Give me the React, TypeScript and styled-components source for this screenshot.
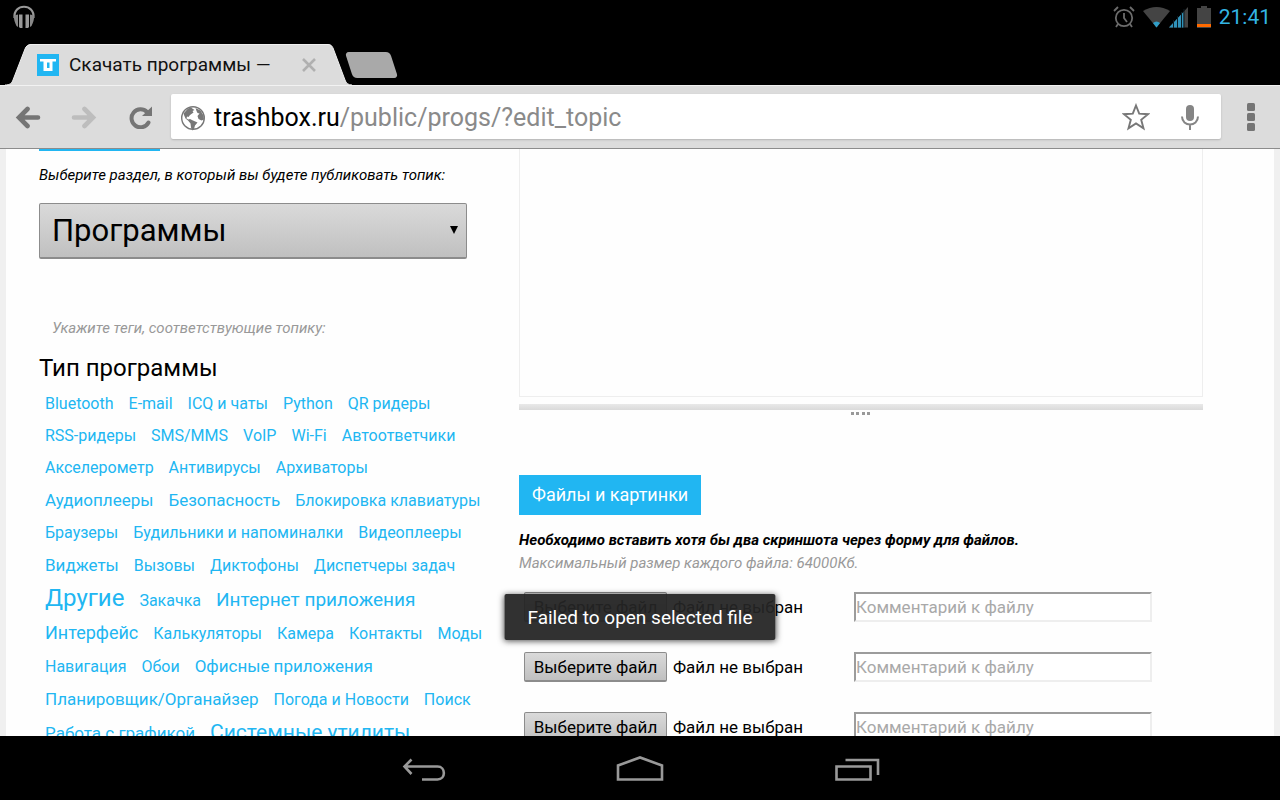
import React, { useRef } from "react";
import styled, { createGlobalStyle } from "styled-components";

const blue = "#21b6f2";

const Global = createGlobalStyle`
  *, *::before, *::after { box-sizing: border-box; }
  body { margin: 0; background: #000; }
  body, button, input, select, textarea { font-family: Roboto, "Noto Sans", sans-serif; }
  button { border: 0; padding: 0; background: none; cursor: pointer; }
  p, h2, ul { margin: 0; padding: 0; font-weight: 400; }
`;

const Screen = styled.div`
  position: relative;
  display: flex;
  flex-direction: column;
  height: 100vh;
  overflow: hidden;
  background: #000;
`;

const StatusBar = styled.div`
  display: flex;
  align-items: center;
  justify-content: space-between;
  flex: none;
  height: 34px;
  padding: 0 9px 0 12px;
`;

const StatusIcons = styled.div`
  display: flex;
  align-items: center;
  gap: 8px;
`;

const Clock = styled.time`
  color: #33b5e5;
  font-size: 21px;
  line-height: 34px;
`;

const TabStrip = styled.div`
  display: flex;
  align-items: flex-end;
  flex: none;
  height: 51px;
  padding-left: 5px;
`;

const Tab = styled.div`
  position: relative;
  display: flex;
  align-items: center;
  width: 348px;
  height: 41px;
  padding: 0 37px 0 32px;
`;

const TabShape = styled.svg`
  position: absolute;
  inset: 0;
`;

const TabTitle = styled.span`
  position: relative;
  flex: 1;
  margin-left: 10px;
  font-size: 19px;
  line-height: 24px;
  color: #111;
`;

const Favicon = styled.svg`
  position: relative;
  flex: none;
`;

const TabClose = styled.button`
  position: relative;
  display: flex;
`;

const NewTab = styled.button`
  width: 45px;
  height: 26px;
  margin: 0 0 7px -4px;
  border-radius: 4px;
  background: #a9a9a9;
  transform: skewX(18deg);
`;

const Toolbar = styled.div`
  display: flex;
  align-items: center;
  flex: none;
  height: 64px;
  padding: 0 17px 1px 14px;
  border-top: 1px solid #f2f2f2;
  border-bottom: 1px solid #8c8c8c;
  background: #dcdcdc;
`;

const IconButton = styled.button`
  display: flex;
  flex: none;
`;

const History = styled.div`
  display: flex;
  align-items: center;
  gap: 28px;
  width: 157px;
`;

const Omnibox = styled.div`
  display: flex;
  align-items: center;
  flex: 1;
  height: 45px;
  margin-right: 18px;
  padding: 0 18px 0 9px;
  gap: 27px;
  border-radius: 2px;
  background: #fff;
  box-shadow: 0 1px 2px #b4b4b4;
`;

const Address = styled.div`
  display: flex;
  align-items: center;
  flex: 1;
  gap: 8px;
  padding-top: 2px;
  font-size: 25px;
  line-height: 32px;
  color: #8a8a8a;
`;

const Host = styled.span`
  color: #000;
`;

const Viewport = styled.main`
  flex: 1;
  min-height: 0;
  padding: 0 6px;
  overflow: hidden;
  background: #f0f0f0;
`;

const Page = styled.div`
  display: grid;
  grid-template-columns: 448px minmax(0, 1fr);
  column-gap: 32px;
  min-height: 100%;
  padding: 0 71px 0 33px;
  background: #fefefe;
`;

const Column = styled.section`
  display: flex;
  flex-direction: column;
  align-items: flex-start;
`;

const HeadingEdge = styled.div`
  width: 121px;
  height: 2px;
  background: ${blue};
`;

const Note = styled.p<{ $tone?: string; $bold?: boolean }>`
  display: block;
  font-size: 15px;
  line-height: 23px;
  font-style: italic;
  font-weight: ${(p) => (p.$bold ? 700 : 400)};
  color: ${(p) => p.$tone ?? "#000"};
`;

const SectionLabel = styled.label`
  margin-top: 13px;
`;

const TagHint = styled.div`
  margin: 58px 0 0 13px;
`;

const SelectBox = styled.div`
  position: relative;
  width: 428px;
  margin-top: 16px;
`;

const Select = styled.select`
  display: block;
  width: 100%;
  height: 56px;
  padding: 0 12px;
  appearance: none;
  border: 1px solid #8c8c8c;
  border-bottom-width: 2px;
  border-radius: 2px;
  background: linear-gradient(#dadada, #c0c0c0);
  color: #000;
  font-size: 31px;
`;

const SelectArrow = styled.svg`
  position: absolute;
  top: 23px;
  right: 9px;
  pointer-events: none;
`;

const TagHeading = styled.h2`
  margin-top: 12px;
  font-size: 24px;
  line-height: 32px;
  color: #000;
`;

const TagList = styled.ul`
  display: flex;
  flex-wrap: wrap;
  align-items: baseline;
  column-gap: 15px;
  padding: 4px 0 0 6px;
  list-style: none;
`;

const TagItem = styled.li<{ $size: number }>`
  font-size: ${(p) => p.$size}px;
  line-height: 32px;
  white-space: nowrap;
`;

const TagLink = styled.a`
  color: ${blue};
  text-decoration: none;
`;

const TopicText = styled.textarea`
  display: block;
  width: 100%;
  height: 248px;
  border: 1px solid #eee;
  border-top: 0;
  resize: none;
  outline: 0;
  background: transparent;
`;

const Resizer = styled.div`
  display: flex;
  flex-direction: column;
  align-items: center;
  width: 100%;
  height: 12px;
  margin: 7px 0 59px;
`;

const ResizerBar = styled.div`
  width: 100%;
  height: 6px;
  margin-bottom: 2px;
  background: linear-gradient(#e9e9e9, #dadada);
`;

const BlueHeading = styled.h2`
  height: 40px;
  padding: 0 13px;
  background: ${blue};
  color: #fff;
  font-size: 18px;
  line-height: 40px;
`;

const FileNotes = styled.div`
  margin-top: 14px;
`;

const FileRows = styled.div`
  display: flex;
  flex-direction: column;
  gap: 30px;
  margin: 17px 0 0 5px;
`;

const FileRow = styled.div`
  display: grid;
  grid-template-columns: 330px 298px;
  height: 30px;
`;

const FilePicker = styled.div`
  display: flex;
  align-items: center;
  gap: 6px;
  font-size: 17px;
  color: #000;
`;

const FileButton = styled.button`
  width: 143px;
  height: 30px;
  border: 1px solid #8c8c8c;
  border-bottom-width: 2px;
  border-radius: 2px;
  background: linear-gradient(#dadada, #c0c0c0);
  color: #000;
  font-size: 17px;
  line-height: 26px;
`;

const Comment = styled.input`
  min-width: 0;
  height: 30px;
  padding: 0;
  border: 2px solid;
  border-color: #9c9c9c #eee #eee #9c9c9c;
  border-radius: 0;
  outline: 0;
  background: #fff;
  font-size: 17px;

  &::placeholder { color: #a9a9a9; opacity: 1; }
`;

const Toast = styled.div`
  position: absolute;
  bottom: 160px;
  left: 50%;
  padding: 12px 23px 10px;
  transform: translateX(-50%);
  border-radius: 2px;
  background: rgba(36, 36, 36, 0.94);
  box-shadow: 0 1px 6px rgba(0, 0, 0, 0.7);
  color: #fff;
  font-size: 19px;
  line-height: 24px;
  white-space: nowrap;
`;

const NavBar = styled.nav`
  display: flex;
  justify-content: center;
  align-items: center;
  flex: none;
  gap: 168px;
  height: 64px;
  padding-top: 2px;
  background: #000;
`;

const tags: [string, number][] = [
  ["Bluetooth", 16], ["E-mail", 16], ["ICQ и чаты", 16], ["Python", 16], ["QR ридеры", 16],
  ["RSS-ридеры", 16], ["SMS/MMS", 16], ["VoIP", 16], ["Wi-Fi", 16], ["Автоответчики", 16],
  ["Акселерометр", 16], ["Антивирусы", 16], ["Архиваторы", 16],
  ["Аудиоплееры", 17], ["Безопасность", 17], ["Блокировка клавиатуры", 16],
  ["Браузеры", 16], ["Будильники и напоминалки", 16], ["Видеоплееры", 16],
  ["Виджеты", 17], ["Вызовы", 16], ["Диктофоны", 16], ["Диспетчеры задач", 16],
  ["Другие", 24], ["Закачка", 16], ["Интернет приложения", 19],
  ["Интерфейс", 18], ["Калькуляторы", 16], ["Камера", 16], ["Контакты", 16], ["Моды", 16],
  ["Навигация", 16], ["Обои", 16], ["Офисные приложения", 17],
  ["Планировщик/Органайзер", 17], ["Погода и Новости", 16], ["Поиск", 16],
  ["Работа с графикой", 17], ["Системные утилиты", 21],
];

function FileField({ index }: { index: number }) {
  const input = useRef<HTMLInputElement>(null);
  return (
    <FileRow>
      <FilePicker>
        <input ref={input} type="file" hidden aria-label={`Файл ${index}`} />
        <FileButton type="button" onClick={() => input.current?.click()}>Выберите файл</FileButton>
        <span>Файл не выбран</span>
      </FilePicker>
      <Comment type="text" placeholder="Комментарий к файлу" aria-label={`Комментарий к файлу ${index}`} />
    </FileRow>
  );
}

export default function App() {
  return (
    <Screen>
      <Global />
      <StatusBar>
        <svg width="24" height="24" viewBox="0 0 24 24" aria-hidden="true">
          <path d="M2.500 13C1 -2 23 -2 21.500 13" fill="none" stroke="#999" strokeWidth="2.200" />
          <path d="M2 10.500L6 9.500V22L4.500 21C3 18 1.500 14 2 10.500zM22 10.500L18 9.500V22L19.500 21C21 18 22.500 14 22 10.500z" fill="#888" />
          <path d="M7 9.500h3.500V23H8L7 22zM17 9.500h-3.500V23H16L17 22z" fill="#999" />
        </svg>
        <StatusIcons>
          <svg width="22" height="22" viewBox="0 0 22 22" fill="none" stroke="#6c6c6c" strokeWidth="1.8" aria-hidden="true">
            <circle cx="11" cy="12" r="8.2" />
            <path d="M11 7v5l3 4M1 5l4-4M21 5l-4-4M5 18l-2 3M17 18l2 3" />
          </svg>
          <svg width="46" height="22" viewBox="0 0 46 22" aria-hidden="true">
            <path d="M0 5Q13.500-3 27 5L13.500 21.500z" fill="#444" />
            <path d="M10 17q3.500-3 7 0l-3.500 4.500z" fill="#2f9ec8" />
            <path d="M26 21.500L45 1v20.500z" fill="#444" />
            <path d="M26 21.500L40.500 6v15.500z" fill="#2f93bb" />
            <path d="M30.500 14v8M34.500 10v12M38.500 6v16M41 3v19" stroke="#0a1c24" strokeWidth="1" />
          </svg>
          <svg width="14" height="22" viewBox="0 0 14 22" aria-hidden="true">
            <path d="M0 2h4V0h6v2h4v20H0z" fill="#444" />
            <path d="M0 18h14v3H0z" fill="#ff6a00" />
          </svg>
          <Clock>21:41</Clock>
        </StatusIcons>
      </StatusBar>

      <TabStrip>
        <Tab>
          <TabShape width="348" height="41" viewBox="0 0 348 41" aria-hidden="true">
            <path d="M0 41C5 41 7 39 8 36L20 5C21 2 23 0 27 0H322C326 0 327 2 328 4L340 36C341 39 343 41 347 41z" fill="#dcdcdc" />
            <path d="M0 41C5 41 7 39 8 36L20 5C21 2 23 .5 27 .5H322C326 .5 327 2 328 4L340 36C341 39 343 41 347 41" fill="none" stroke="#f0f0f0" />
          </TabShape>
          <Favicon width="22" height="22" viewBox="0 0 22 22" aria-hidden="true">
            <path d="M0 0h22v22H0z" fill={blue} />
            <path d="M3 5h16v2.500h-3.500V17H6.500V7.500H3zM10 8.500v5.500h2.500V8.500z" fill="#fff" fillRule="evenodd" />
          </Favicon>
          <TabTitle>Скачать программы —</TabTitle>
          <TabClose type="button" aria-label="Закрыть вкладку">
            <svg width="14" height="14" viewBox="0 0 14 14" stroke="#b0b0b0" strokeWidth="2.600"><path d="M1 1l12 12M13 1L1 13" /></svg>
          </TabClose>
        </Tab>
        <NewTab type="button" aria-label="Новая вкладка" />
      </TabStrip>

      <Toolbar>
        <History>
          <IconButton type="button" aria-label="Назад">
            <svg width="28" height="24" viewBox="0 0 28 24" fill="none" stroke="#757575" strokeWidth="4.600" strokeLinecap="round"><path d="M5.500 12.500h18.500M13.500 4L5 12.500l8.500 8.500" /></svg>
          </IconButton>
          <IconButton type="button" aria-label="Вперёд">
            <svg width="28" height="24" viewBox="0 0 28 24" fill="none" stroke="#bdbdbd" strokeWidth="4.600" strokeLinecap="round"><path d="M22.500 12.500H4M14.500 4l8.500 8.500-8.500 8.500" /></svg>
          </IconButton>
          <IconButton type="button" aria-label="Обновить">
            <svg width="28" height="24" viewBox="0 0 28 24" fill="none" stroke="#757575" strokeWidth="4" strokeLinecap="round"><path d="M22.500 17.500a9 9 0 1 1-1.500-10.500" /><path d="M26 1.500v9.500H16z" fill="#757575" stroke="none" /></svg>
          </IconButton>
        </History>
        <Omnibox>
          <Address>
            <svg width="26" height="26" viewBox="0 0 26 26" aria-hidden="true">
              <circle cx="13" cy="13" r="11.300" fill="#fff" stroke="#777" strokeWidth="1.400" />
              <path d="M3.500 8.500L8 3.500l3-1 2 1.500 1.500 1-2 1 1 1.500-3.500 2.500-1.500 2-1.500-.5-.5 2 2 1 1.500-.5 3 1.500 4.500 2-2.500 3-1 3.500-1.500 1.500-1.500-3-.5-4-2.500-3-2.500-2-1.500-3.500z" fill="#777" />
              <path d="M15.500 3l5 2.500 3 5 .5 4-2.500 1-3-1.500-1-3 2-2.500-2-.5-1-2z" fill="#777" />
            </svg>
            <span><Host>trashbox.ru</Host>/public/progs/?edit_topic</span>
          </Address>
          <IconButton type="button" aria-label="Добавить в закладки">
            <svg width="28" height="28" viewBox="0 0 28 28" fill="none" stroke="#777" strokeWidth="1.900"><path d="M14 2.500l3.200 8.200 8.800.5-6.800 5.600 2.300 8.500L14 20.500l-7.500 4.800 2.300-8.500L2 11.200l8.800-.5z" /></svg>
          </IconButton>
          <IconButton type="button" aria-label="Голосовой поиск">
            <svg width="26" height="28" viewBox="0 0 26 28" fill="none" stroke="#858585" strokeWidth="2"><rect x="9" y="2" width="8" height="16" rx="4" fill="#858585" stroke="none" /><path d="M5 13.500c0 10.500 16 10.500 16 0M13 21v6" /></svg>
          </IconButton>
        </Omnibox>
        <IconButton type="button" aria-label="Меню">
          <svg width="24" height="28" viewBox="0 0 24 28" fill="#757575"><rect x="8" width="8" height="8" rx="1.500" /><rect x="8" y="10" width="8" height="8" rx="1.500" /><rect x="8" y="20" width="8" height="8" rx="1.500" /></svg>
        </IconButton>
      </Toolbar>

      <Viewport>
        <Page>
          <Column>
            <HeadingEdge />
            <SectionLabel htmlFor="section"><Note as="span">Выберите раздел, в который вы будете публиковать топик:</Note></SectionLabel>
            <SelectBox>
              <Select id="section"><option>Программы</option></Select>
              <SelectArrow width="8" height="8" viewBox="0 0 8 8" aria-hidden="true"><path d="M0 0h8L4 8z" /></SelectArrow>
            </SelectBox>
            <TagHint><Note $tone="#999">Укажите теги, соответствующие топику:</Note></TagHint>
            <TagHeading>Тип программы</TagHeading>
            <TagList>
              {tags.map(([name, size]) => (
                <TagItem key={name} $size={size}><TagLink href="#">{name}</TagLink></TagItem>
              ))}
            </TagList>
          </Column>

          <Column>
            <TopicText aria-label="Текст топика" />
            <Resizer>
              <ResizerBar />
              <svg width="20" height="4" viewBox="0 0 20 4" fill="#999" aria-hidden="true">
                <path d="M0 0h3v3H0zM5 0h3v3H5zM11 0h3v3h-3zM16 0h3v3h-3z" />
              </svg>
            </Resizer>
            <BlueHeading>Файлы и картинки</BlueHeading>
            <FileNotes>
              <Note $bold>Необходимо вставить хотя бы два скриншота через форму для файлов.</Note>
              <Note $tone="#999">Максимальный размер каждого файла: 64000Кб.</Note>
            </FileNotes>
            <FileRows>
              {[1, 2, 3].map((n) => <FileField key={n} index={n} />)}
            </FileRows>
          </Column>
        </Page>
      </Viewport>

      <Toast role="status">Failed to open selected file</Toast>

      <NavBar aria-label="Системная навигация">
        <IconButton type="button" aria-label="Назад">
          <svg width="48" height="30" viewBox="0 0 48 30" fill="none" stroke="#999" strokeWidth="2.600"><path d="M12.500 5.500L5.500 12.500l7 7.500M5 12.500h33.500c8.500 0 8.500 13 0 13H23" /></svg>
        </IconButton>
        <IconButton type="button" aria-label="Домой">
          <svg width="50" height="30" viewBox="0 0 50 30" fill="none" stroke="#999" strokeWidth="2.600"><path d="M3 25.500V11.500L25 3.500l22 8v14z" /></svg>
        </IconButton>
        <IconButton type="button" aria-label="Недавние приложения">
          <svg width="48" height="30" viewBox="0 0 48 30" fill="none" stroke="#999" strokeWidth="2.600"><path d="M3.500 12.500h34v13h-34zM12.500 6h32.500v15" /></svg>
        </IconButton>
      </NavBar>
    </Screen>
  );
}
